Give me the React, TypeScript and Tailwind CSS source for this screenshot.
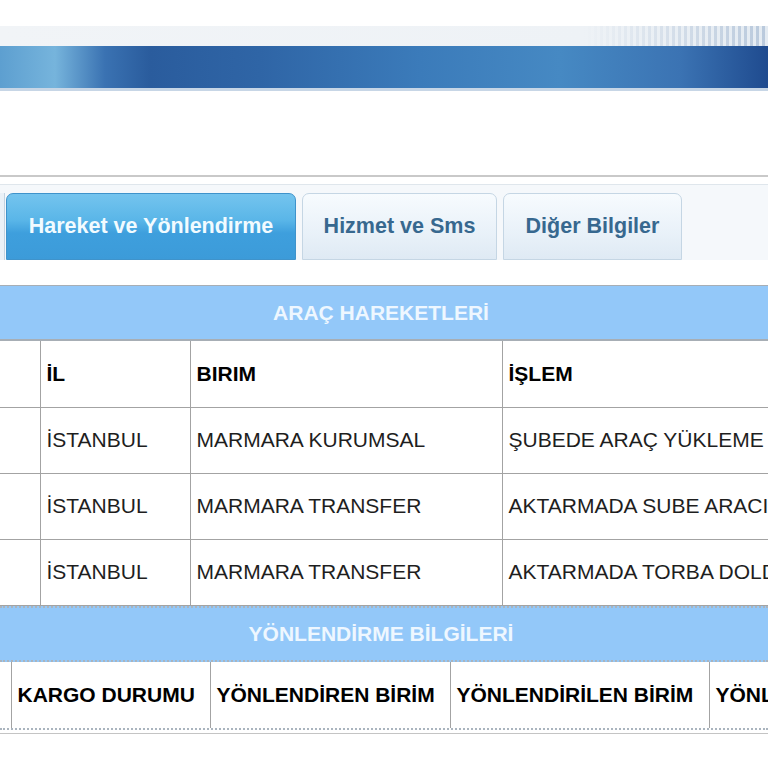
import React from "react";

const FONT = "font-['Liberation_Sans',Arial,sans-serif]";

const tabs = [
  { label: "Hareket ve Yönlendirme", active: true, width: "w-[290px]" },
  { label: "Hizmet ve Sms", active: false, width: "w-[195px]" },
  { label: "Diğer Bilgiler", active: false, width: "w-[179px]" },
];

const moves = [
  { il: "İSTANBUL", birim: "MARMARA KURUMSAL", islem: "ŞUBEDE ARAÇ YÜKLEME" },
  { il: "İSTANBUL", birim: "MARMARA TRANSFER", islem: "AKTARMADA SUBE ARACINA YÜKLEME" },
  { il: "İSTANBUL", birim: "MARMARA TRANSFER", islem: "AKTARMADA TORBA DOLDURMA" },
];

const Banner = () => (
  <div className="pt-[26px]">
    <div className="h-[20px] bg-[linear-gradient(90deg,#f1f4f7_0%,#eef2f6_76%,rgba(238,242,246,0)_100%),repeating-linear-gradient(90deg,#b9c9dc_0px,#b9c9dc_3px,#e4ebf2_3px,#e4ebf2_6px)]" />
    <div className="h-[42px] bg-[linear-gradient(90deg,#5d9fd0_0px,#76b4dc_55px,#3a72b2_105px,#2a5c9d_150px,#2f65a6_260px,#3b7bba_420px,#4689c3_560px,#3b73b3_680px,#1f4b8f_768px)]" />
    <div className="h-[3px] bg-[#c7d6e6]" />
  </div>
);

const TabStrip = () => (
  <div className="mt-[84px] border-t-2 border-[#c9c9c9]">
    <div className="mt-[7px] border-t border-[#dfe6ec] bg-[#f5f8fb] pt-[8px] flex items-end overflow-hidden">
      <div className="h-[67px] w-[5px] border-r border-[#c3d3e1] bg-[#eaf1f7]" />
      {tabs.map((t) =>
        t.active ? (
          <div
            key={t.label}
            className={`${t.width} ml-[1px] h-[67px] rounded-t-[7px] border border-[#3f93cb] bg-[linear-gradient(180deg,#74c4ee_0%,#5ab6e8_40%,#3e9fdd_60%,#3c9bd9_100%)] flex items-center justify-center text-[21.5px] font-bold text-[#f2fbff]`}
          >
            {t.label}
          </div>
        ) : (
          <div
            key={t.label}
            className={`${t.width} ml-[6px] h-[67px] rounded-t-[7px] border border-[#c5d6e4] bg-[linear-gradient(180deg,#f7fbfe_0%,#eaf2f9_55%,#dfeaf4_100%)] flex items-center justify-center text-[21.5px] font-bold text-[#37688f]`}
          >
            {t.label}
          </div>
        )
      )}
    </div>
  </div>
);

const SectionHead = ({ title, dotted }: { title: string; dotted?: boolean }) => (
  <div
    className={`h-[56px] bg-[#93c8f9] flex items-center justify-center pr-[6px] text-[21px] font-bold text-[#eef7ff] ${
      dotted ? "border-y-2 border-dotted border-[#aab4be]" : "border-t border-b-2 border-[#a7aeb5]"
    }`}
  >
    {title}
  </div>
);

export default function App() {
  return (
    <div className={`${FONT} w-[768px] h-[768px] overflow-hidden bg-white`}>
      <Banner />
      <TabStrip />

      <div className="mt-[25px]">
        <SectionHead title="ARAÇ HAREKETLERİ" />
        <table className="table-fixed border-collapse w-[820px] text-[21px] text-[#1e1e1e]">
          <colgroup>
            <col className="w-[40px]" />
            <col className="w-[150px]" />
            <col className="w-[312px]" />
            <col className="w-[318px]" />
          </colgroup>
          <thead>
            <tr className="h-[66px]">
              <th className="border-r border-b border-[#a3a3a3]" />
              <th className="border-x border-b border-[#a3a3a3] px-[6px] text-left font-bold text-black">İL</th>
              <th className="border-x border-b border-[#a3a3a3] px-[6px] text-left font-bold text-black">BIRIM</th>
              <th className="border-l border-b border-[#a3a3a3] px-[6px] text-left font-bold text-black">İŞLEM</th>
            </tr>
          </thead>
          <tbody>
            {moves.map((m, i) => (
              <tr key={i} className="h-[66px]">
                <td className="border-r border-b border-[#a3a3a3]" />
                <td className="border-x border-b border-[#a3a3a3] px-[6px] whitespace-nowrap">{m.il}</td>
                <td className="border-x border-b border-[#a3a3a3] px-[6px] whitespace-nowrap">{m.birim}</td>
                <td className="border-l border-b border-[#a3a3a3] px-[6px] whitespace-nowrap overflow-hidden">{m.islem}</td>
              </tr>
            ))}
          </tbody>
        </table>
      </div>

      <SectionHead title="YÖNLENDİRME BİLGİLERİ" dotted />
      <table className="table-fixed border-collapse w-[960px] text-[21px] text-black">
        <colgroup>
          <col className="w-[11px]" />
          <col className="w-[199px]" />
          <col className="w-[240px]" />
          <col className="w-[259px]" />
          <col className="w-[251px]" />
        </colgroup>
        <thead>
          <tr className="h-[66px]">
            <th className="border-r border-[#a3a3a3]" />
            <th className="border-x border-[#a3a3a3] px-[6px] text-left font-bold whitespace-nowrap">KARGO DURUMU</th>
            <th className="border-x border-[#a3a3a3] px-[6px] text-left font-bold whitespace-nowrap">YÖNLENDİREN BİRİM</th>
            <th className="border-x border-[#a3a3a3] px-[6px] text-left font-bold whitespace-nowrap">YÖNLENDİRİLEN BİRİM</th>
            <th className="border-l border-[#a3a3a3] px-[6px] text-left font-bold whitespace-nowrap overflow-hidden">YÖNLENDİRME TARİHİ</th>
          </tr>
        </thead>
      </table>
      <div className="border-t-2 border-dotted border-[#aab4be]" />
      <div className="mt-[3px] border-t border-[#c4c4c4]" />
    </div>
  );
}
